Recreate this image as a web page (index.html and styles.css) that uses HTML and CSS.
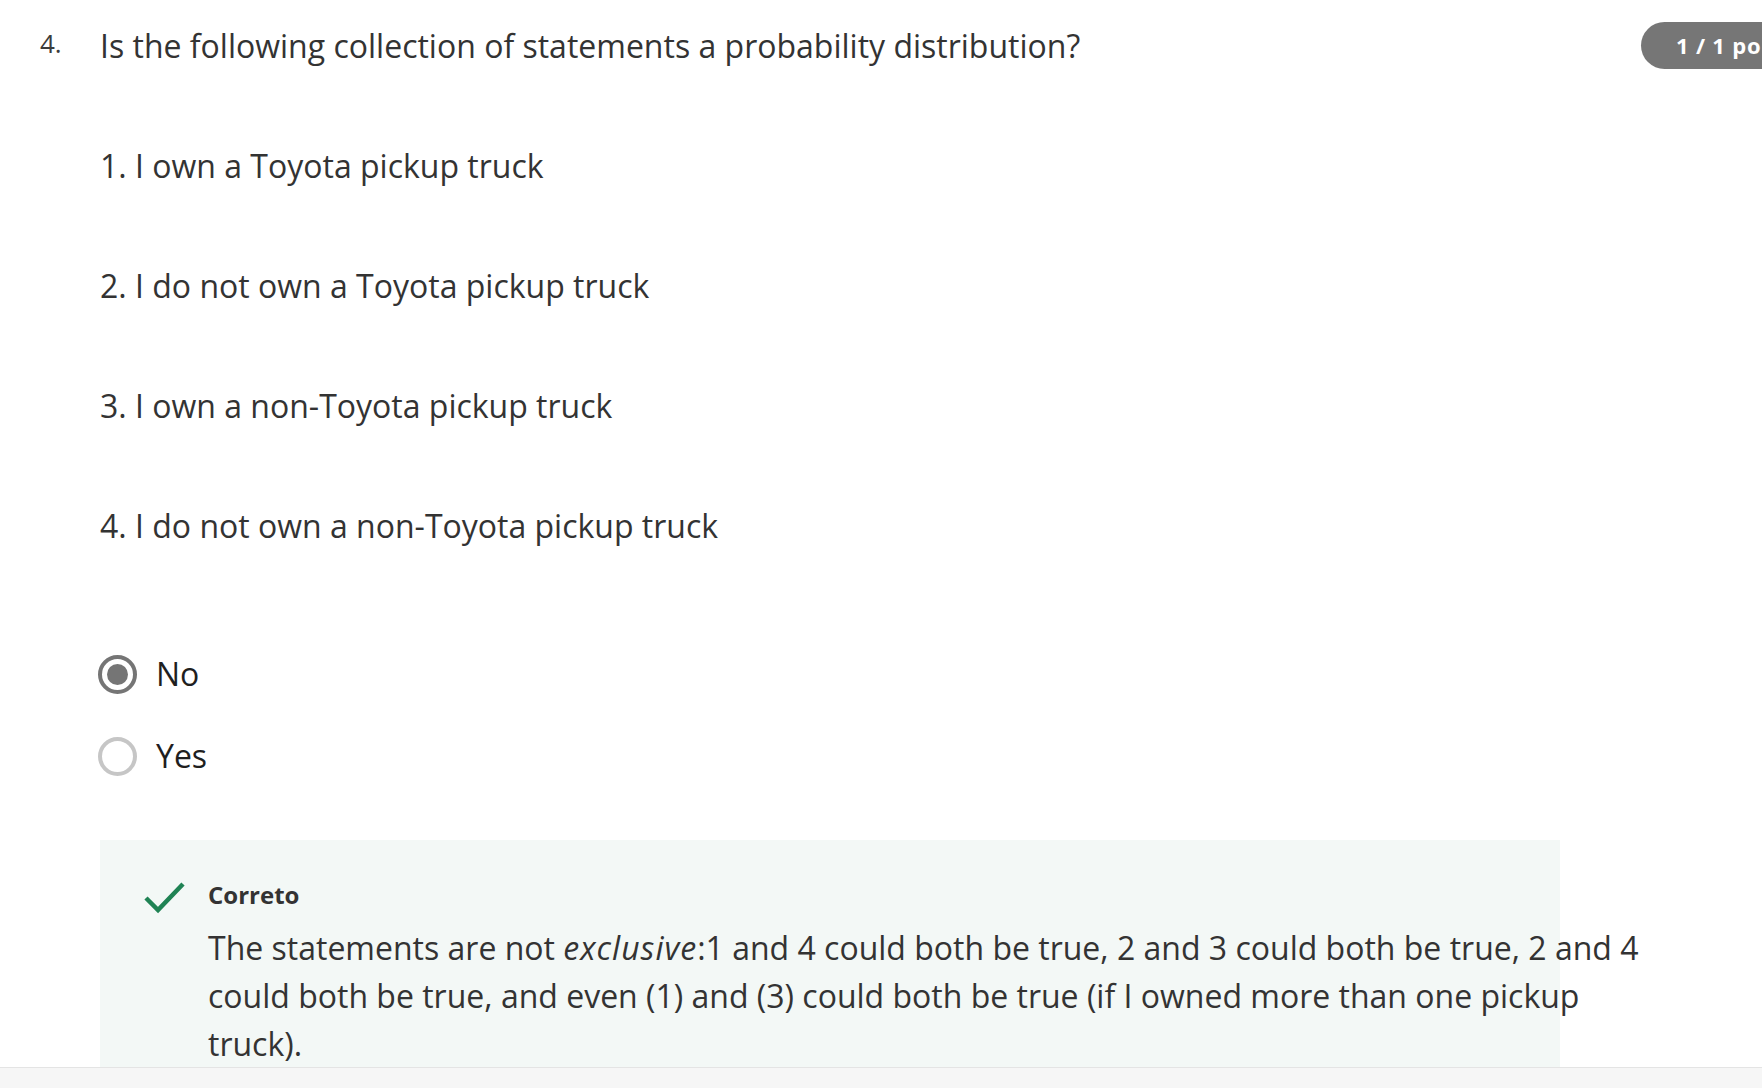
FILE: index.html
```html
<!DOCTYPE html>
<html lang="en">
<head>
<meta charset="utf-8">
<title>Question 4</title>
<link rel="stylesheet" href="styles.css">
</head>
<body>
<main class="page">
  <div class="question-head">
    <div class="qnum">4.</div>
    <div class="qtext">Is the following collection of statements a probability distribution?</div>
    <div class="badge">1 / 1 ponto</div>
  </div>

  <div class="statements">
    <p class="statement">1. I own a Toyota pickup truck</p>
    <p class="statement">2. I do not own a Toyota pickup truck</p>
    <p class="statement">3. I own a non-Toyota pickup truck</p>
    <p class="statement">4. I do not own a non-Toyota pickup truck</p>
  </div>

  <div class="options">
    <label class="option">
      <span class="radio checked"><span class="dot"></span></span>
      <span class="opt-label">No</span>
    </label>
    <label class="option">
      <span class="radio"></span>
      <span class="opt-label">Yes</span>
    </label>
  </div>

  <section class="feedback">
    <svg class="check" width="44" height="36" viewBox="0 0 44 36" aria-hidden="true">
      <path d="M3 18 L15 30 L40 4" fill="none" stroke="#1f8354" stroke-width="4.5" stroke-linecap="butt" stroke-linejoin="miter"/>
    </svg>
    <div class="fb-body">
      <div class="fb-title">Correto</div>
      <p class="fb-text">The statements are not <em>exclusive</em>:1 and 4 could both be true, 2 and 3 could both be true, 2 and 4 could both be true, and even (1) and (3) could both be true (if I owned more than one pickup truck).</p>
    </div>
  </section>
</main>
<div class="bottom-bar"></div>
</body>
</html>
```
FILE: styles.css
```css
html, body {
  margin: 0;
  padding: 0;
  overflow: hidden;
  background: #ffffff;
}

body {
  font-family: "Open Sans", "Noto Sans", sans-serif;
  color: #333333;
  width: 1762px;
  height: 1088px;
}

.page {
  padding: 22px 0 0 40px;
}

.question-head {
  display: flex;
  align-items: flex-start;
}

.qnum {
  flex: 0 0 60px;
  font-size: 26px;
  line-height: 48px;
  margin-top: -3px;
  color: #3c3c3c;
}

.qtext {
  flex: 0 0 1541px;
  font-size: 32px;
  line-height: 48px;
}

.badge {
  flex-shrink: 0;
  margin-top: 0;
  height: 47px;
  line-height: 47px;
  padding: 0 36px 0 35px;
  border-radius: 24px;
  background: #767676;
  color: #ffffff;
  font-size: 22px;
  font-weight: 700;
  letter-spacing: 0.8px;
  white-space: nowrap;
}

.statements {
  display: flex;
  flex-direction: column;
  gap: 72px;
  margin: 72px 0 0 60px;
}

.statement {
  margin: 0;
  font-size: 32px;
  line-height: 48px;
}

.options {
  display: flex;
  flex-direction: column;
  gap: 34px;
  margin: 100px 0 0 58px;
}

.option {
  display: flex;
  align-items: center;
  gap: 19px;
  height: 48px;
}

.radio {
  box-sizing: border-box;
  width: 39px;
  height: 39px;
  border-radius: 50%;
  border: 4.5px solid #c6c6c6;
  display: flex;
  align-items: center;
  justify-content: center;
  background: #ffffff;
}

.radio.checked {
  border-color: #757575;
}

.dot {
  width: 21px;
  height: 21px;
  border-radius: 50%;
  background: #757575;
}

.opt-label {
  font-size: 32px;
  line-height: 48px;
  color: #1f1f1f;
}

.feedback {
  display: flex;
  align-items: flex-start;
  gap: 21px;
  box-sizing: border-box;
  width: 1460px;
  height: 260px;
  margin: 60px 0 0 60px;
  padding: 37px 0 0 43px;
  background: #f3f8f6;
}

.check {
  flex-shrink: 0;
  margin-top: 3px;
}

.fb-body {
  flex-shrink: 0;
  width: 1460px;
}

.fb-title {
  font-size: 24px;
  font-weight: 700;
  line-height: 36px;
  color: #333333;
}

.fb-text {
  margin: 11px 0 0 0;
  font-size: 32px;
  line-height: 48px;
  color: #333333;
}

.fb-text em {
  letter-spacing: 1px;
}

.bottom-bar {
  position: fixed;
  left: 0;
  right: 0;
  bottom: 0;
  height: 20px;
  background: #f6f6f6;
  border-top: 1px solid #e4e4e4;
}
```
